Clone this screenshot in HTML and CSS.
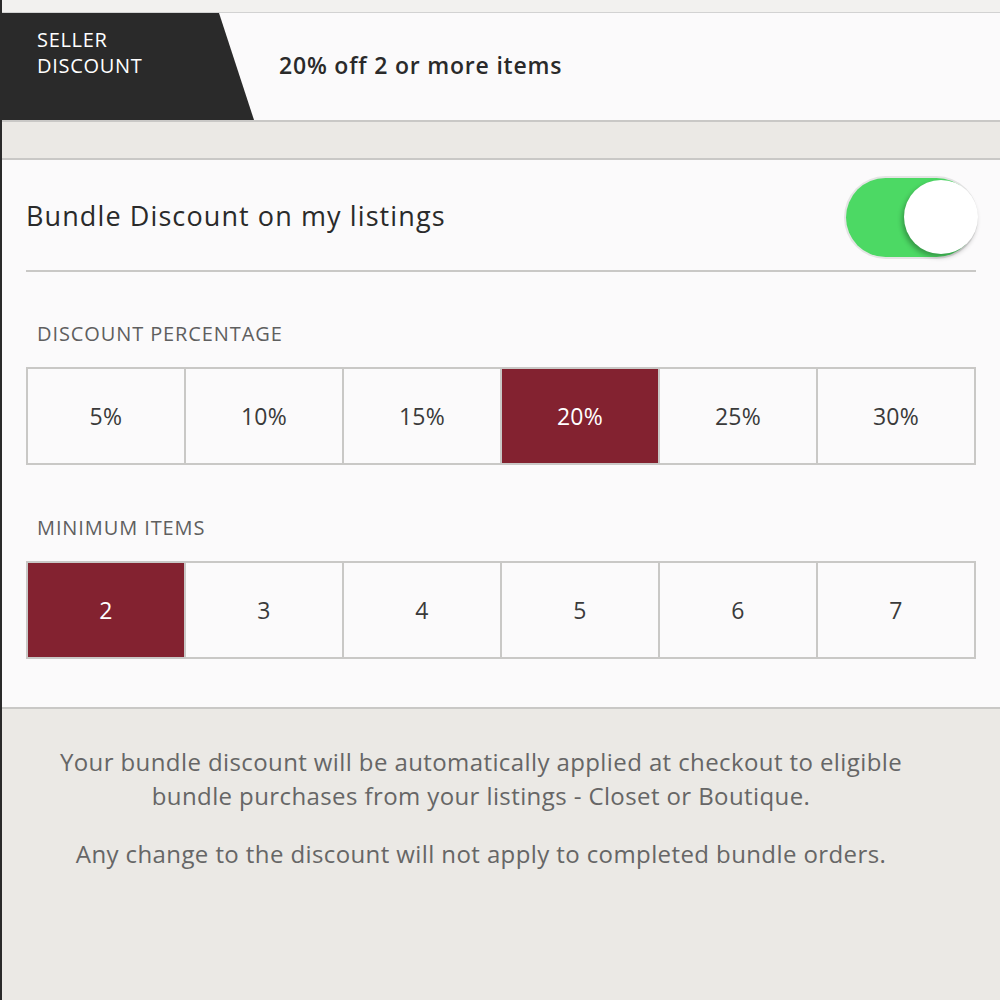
FILE: index.html
```html
<!DOCTYPE html>
<html>
<head>
<meta charset="utf-8">
<link rel="stylesheet" href="styles.css">
</head>
<body>
<div class="page">
  <div class="topstrip"></div>
  <div class="banner">
    <div class="tag"><span>SELLER<br>DISCOUNT</span></div>
    <div class="offer">20% off 2 or more items</div>
  </div>
  <div class="gap"></div>
  <div class="card">
    <div class="row">
      <div class="title">Bundle Discount on my listings</div>
      <div class="toggle"><div class="knob"></div></div>
    </div>
    <div class="divider"></div>
    <div class="label">DISCOUNT PERCENTAGE</div>
    <div class="seg">
      <div class="cell">5%</div>
      <div class="cell">10%</div>
      <div class="cell">15%</div>
      <div class="cell on">20%</div>
      <div class="cell">25%</div>
      <div class="cell">30%</div>
    </div>
    <div class="label">MINIMUM ITEMS</div>
    <div class="seg">
      <div class="cell on">2</div>
      <div class="cell">3</div>
      <div class="cell">4</div>
      <div class="cell">5</div>
      <div class="cell">6</div>
      <div class="cell">7</div>
    </div>
  </div>
  <div class="footer">
    <p>Your bundle discount will be automatically applied at checkout to eligible<br>bundle purchases from your listings - Closet or Boutique.</p>
    <p>Any change to the discount will not apply to completed bundle orders.</p>
  </div>
</div>
</body>
</html>
```
FILE: styles.css
```css
html, body {
  margin: 0;
  padding: 0;
}
body {
  background: #ebe9e5;
  font-family: "Open Sans", Lato, sans-serif;
  color: #2a2a2a;
}
.page {
  width: 1000px;
  min-height: 1000px;
  box-sizing: border-box;
  border-left: 2px solid #2a2a2a;
}
.topstrip {
  height: 12px;
  background: #f2f1ef;
  border-bottom: 1px solid #d2d2d2;
}
.banner {
  height: 107px;
  background: #fbfafb;
  display: flex;
  align-items: center;
  border-bottom: 2px solid #c9c8c6;
}
.tag {
  align-self: stretch;
  width: 252px;
  background: #2a2a2a;
  clip-path: polygon(0 0, 217px 0, 252px 100%, 0 100%);
  color: #fff;
  font-size: 20px;
  letter-spacing: 0.7px;
  line-height: 26px;
  padding-left: 35px;
  padding-top: 14px;
  box-sizing: border-box;
}
.offer {
  margin-left: 25px;
  margin-top: -4px;
  font-size: 23px;
  letter-spacing: 0.8px;
  font-weight: 600;
  color: #2a2a2a;
}
.gap {
  height: 36px;
  border-bottom: 2px solid #c9c8c6;
}
.card {
  background: #fbfafb;
  padding: 0 24px 48px 24px;
  border-bottom: 2px solid #c9c8c6;
}
.row {
  height: 110px;
  display: flex;
  align-items: center;
  justify-content: space-between;
}
.title {
  font-size: 27px;
  letter-spacing: 1.1px;
  color: #2a2a2a;
}
.toggle {
  width: 130px;
  height: 79px;
  border-radius: 40px;
  background: #4cd964;
  box-shadow: 0 0 0 2px #e4e4e4;
  position: relative;
  margin-top: 4px;
}
.knob {
  position: absolute;
  right: -2px;
  top: 2px;
  width: 74px;
  height: 74px;
  border-radius: 50%;
  background: #fff;
  box-shadow: -2px 3px 5px rgba(0,0,0,0.3);
}
.divider {
  height: 2px;
  background: #c9c8c6;
}
.label {
  font-size: 20px;
  letter-spacing: 0.9px;
  color: #5f5f5f;
  padding-left: 11px;
  height: 45px;
  line-height: 24px;
  margin-top: 50px;
}
.seg + .label {
  margin-top: 51px;
}
.seg {
  display: grid;
  grid-template-columns: repeat(6, 1fr);
  gap: 2px;
  background: #c9c8c6;
  border: 2px solid #c9c8c6;
  height: 94px;
}
.cell {
  background: #fbfafb;
  display: flex;
  align-items: center;
  justify-content: center;
  font-size: 23px;
  letter-spacing: 0.3px;
  color: #3a3a3a;
}
.cell.on {
  background: #832230;
  color: #fff;
}
.footer {
  padding: 36px 40px 0 0;
  text-align: center;
  font-size: 24px;
  letter-spacing: 0.4px;
  line-height: 34px;
  color: #666;
}
.footer p {
  margin: 0 0 24px 0;
}
```
